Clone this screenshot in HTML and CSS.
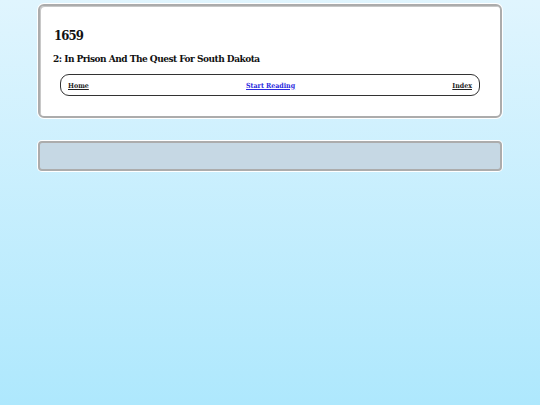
FILE: index.html
```html
<!DOCTYPE html>
<html>
<head>
<meta charset="utf-8">
<link rel="stylesheet" href="styles.css">
</head>
<body>
<div class="wrap">
  <div class="card">
    <h1 class="title">1659</h1>
    <h2 class="subtitle">2: In Prison And The Quest For South Dakota</h2>
    <nav class="nav">
      <a class="nav-link" href="#">Home</a>
      <a class="nav-link nav-link--primary" href="#">Start Reading</a>
      <a class="nav-link" href="#">Index</a>
    </nav>
  </div>
  <div class="bar"></div>
</div>
</body>
</html>
```
FILE: styles.css
```css
html, body {
  margin: 0;
  padding: 0;
  height: 100%;
}
body {
  background: linear-gradient(to bottom, #e0f5fe 0%, #aee8fd 100%);
  font-family: "DejaVu Serif", "Liberation Serif", serif;
  font-stretch: condensed;
  color: #111;
}
.wrap {
  width: 464px;
  margin: 0 auto;
  padding-top: 4px;
  display: flex;
  flex-direction: column;
  gap: 23px;
}
.card {
  background: #fff;
  border: 2px solid #acacac;
  border-radius: 6px;
  box-shadow: 0 0 0 1px #fff, inset 1px 1px 0 #c8c8c8;
  padding: 21px 13px 20px 14px;
}
.title {
  margin: 0;
  font-size: 13px;
  font-weight: bold;
  line-height: 18px;
  letter-spacing: -0.9px;
}
.subtitle {
  margin: 7px 0 0 -1px;
  font-size: 10px;
  font-weight: bold;
  line-height: 14px;
  letter-spacing: -0.5px;
}
.nav {
  margin: 8px 7px 0 6px;
  border: 1.5px solid #333;
  border-radius: 9px;
  height: 20px;
  padding: 0 7px;
  display: flex;
  align-items: center;
  justify-content: space-between;
}
.nav-link {
  font-size: 7px;
  font-weight: bold;
  color: #222;
  text-decoration: underline;
}
.nav-link--primary {
  color: #2a2ae0;
}
.bar {
  height: 26px;
  background: #c6d8e4;
  border: 2px solid #acacac;
  border-radius: 4px;
  box-shadow: 0 0 0 1px #fff;
}
```
